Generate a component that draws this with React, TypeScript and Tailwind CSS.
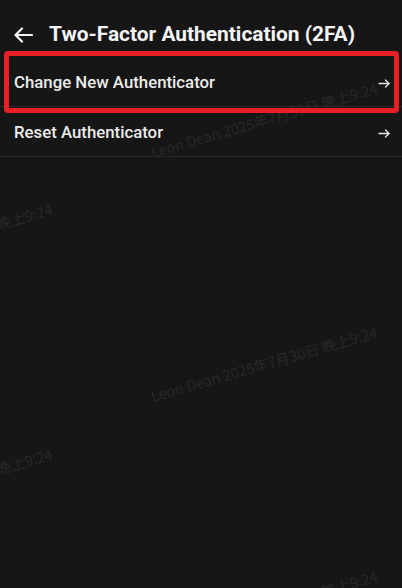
import React from 'react';

const watermark = 'Leon Dean 2025年7月30日 晚上9:24';

// start points (left baseline) of each tiled watermark
const marks = [
  { left: 153, top: 145 },
  { left: 153, top: 389 },
  { left: 153, top: 633 },
  { left: -172, top: 266 },
  { left: -172, top: 511 },
];

const RightArrow = () => (
  <svg className="mt-[3px]" width="12" height="9" viewBox="0 0 12 9" fill="none" stroke="#e6e6e6" strokeWidth="1.3" strokeLinecap="round" strokeLinejoin="round">
    <path d="M1 4.5h10" />
    <path d="M7.5 1l3.5 3.5L7.5 8" />
  </svg>
);

const MenuRow = ({ label }: { label: string }) => (
  <div className="flex h-[50px] items-center justify-between border-b border-[#2a2a2a] pl-[14px] pr-[12px]">
    <span className="pt-[3px] text-[16.8px] font-medium text-[#ececec]">{label}</span>
    <RightArrow />
  </div>
);

const App = () => {
  return (
    <div
      className="relative h-[588px] w-full overflow-hidden bg-[#161616]"
      style={{ fontFamily: 'Roboto, "Noto Sans", sans-serif' }}
    >
      {/* Header */}
      <div className="mt-[11px] flex h-[46px] items-center pl-[14px] pt-[2px]">
        <svg width="19" height="16" viewBox="0 0 19 16" fill="none" stroke="#f2f2f2" strokeWidth="2.2" strokeLinecap="round" strokeLinejoin="round">
          <path d="M18 8H2" />
          <path d="M8 1.5L1.5 8 8 14.5" />
        </svg>
        <h1 className="ml-[16px] text-[20.9px] font-bold text-[#f4f4f4]">
          Two-Factor Authentication (2FA)
        </h1>
      </div>

      {/* Options */}
      <MenuRow label="Change New Authenticator" />
      <MenuRow label="Reset Authenticator" />

      {/* Watermark */}
      {marks.map((m, i) => (
        <span
          key={i}
          className="pointer-events-none absolute origin-bottom-left -rotate-[16deg] whitespace-nowrap text-[14.5px] leading-[14px] text-[#282828]"
          style={{ left: m.left, top: m.top, fontFamily: '"Noto Sans CJK SC", "Noto Sans", sans-serif' }}
        >
          {watermark}
        </span>
      ))}

      {/* Highlight box */}
      <div className="pointer-events-none absolute left-[4px] top-[51px] h-[62px] w-[395px] rounded-[4px] border-[5px] border-[#e81f27]" />
    </div>
  );
};

export default App;
